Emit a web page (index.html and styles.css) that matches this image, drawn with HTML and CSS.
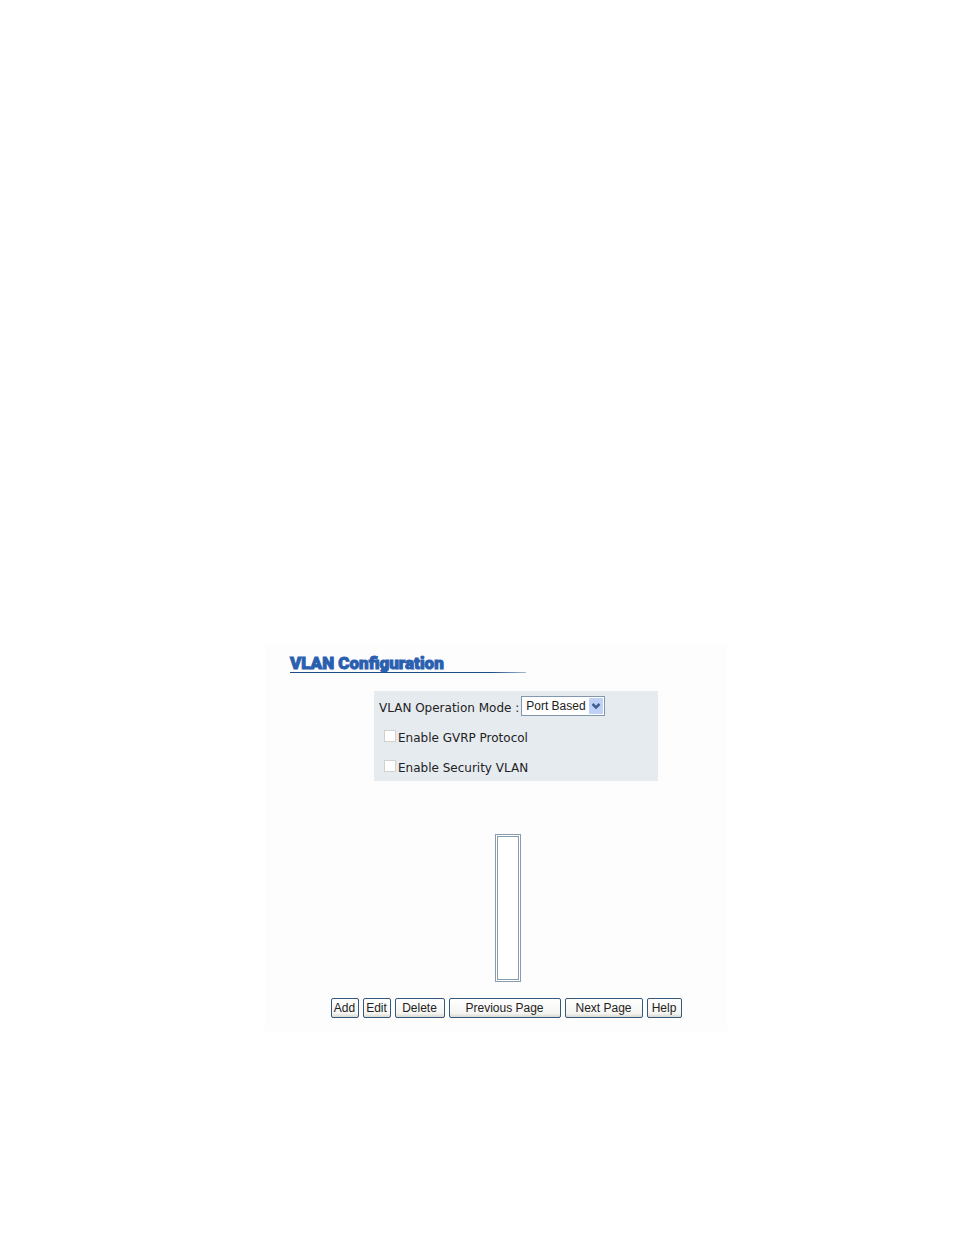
FILE: index.html
```
<!DOCTYPE html>
<html lang="en">
<head>
    <meta charset="UTF-8">
    <meta name="viewport" content="width=device-width, initial-scale=1.0">
    <title>VLAN Configuration</title>
    <link rel="stylesheet" href="styles.css">
</head>
<body>

    <main class="page">
        <h1 class="title">VLAN Configuration</h1>
        <form class="vlan-form">
            <div class="settings">
                <div class="row mode-row">
                    <label for="mode">VLAN Operation Mode :</label>
                    <span class="dropdown">
                        <select id="mode">
                            <option>Port Based</option>
                        </select>
                        <svg class="arrow" viewBox="0 0 14 16" aria-hidden="true">
                            <rect width="14" height="16" rx="1" fill="#bfd1f7"/>
                            <path d="M3.5 6l3.5 3.5L10.500 6" fill="none" stroke="#42608f" stroke-width="2.500"/>
                        </svg>
                    </span>
                </div>
                <div class="row check-row">
                    <input type="checkbox" id="gvrp" disabled>
                    <label for="gvrp">Enable GVRP Protocol</label>
                </div>
                <div class="row check-row">
                    <input type="checkbox" id="security" disabled>
                    <label for="security">Enable Security VLAN</label>
                </div>
            </div>

            <select class="vlan-list" size="8" aria-label="VLAN list"></select>

            <div class="buttons">
                <button type="button">Add</button>
                <button type="button">Edit</button>
                <button type="button" class="medium">Delete</button>
                <button type="button" class="wide">Previous Page</button>
                <button type="button" class="next">Next Page</button>
                <button type="button" class="help">Help</button>
            </div>
        </form>
    </main>

</body>
</html>
```
FILE: styles.css
```
* {
    margin: 0;
    padding: 0;
    box-sizing: border-box;
}
body {
    background-color: #fff;
    color: #222;
    font-family: Verdana, "DejaVu Sans", sans-serif;
    font-size: 12px;
    padding: 645px 0 0 265px;
}
.page {
    max-width: 462px;
    background-color: #fdfdfd;
    padding: 7px 25px 13px;
}
.title {
    width: 236px;
    border-bottom: 1px solid;
    border-image: linear-gradient(to right, #1d4d86 85%, #a9bdd3) 1;
    color: #2a5fb0;
    font-family: Impact, Roboto, sans-serif;
    font-size: 17px;
    font-weight: 900;
    line-height: 20px;
    padding-top: 1px;
    height: 21px;
    white-space: nowrap;
    -webkit-text-stroke: 1px #2a5fb0;
}
.vlan-form {
    display: flex;
    flex-direction: column;
    align-items: center;
    padding-top: 18px;
    padding-left: 20px;
}
.settings {
    width: 284px;
    margin-left: 20px;
    background-color: #e6ebf0;
}
.row {
    display: flex;
    align-items: center;
    height: 30px;
    padding-left: 5px;
}
.mode-row {
    gap: 2px;
}
.check-row {
    padding-left: 10px;
    gap: 2px;
}
.row label {
    padding-top: 4px;
}
.dropdown {
    position: relative;
}
.dropdown select {
    display: block;
    appearance: none;
    width: 84px;
    height: 20px;
    padding-left: 4px;
    border: 1px solid #8296ad;
    border-radius: 0;
    background-color: #fff;
    color: #222;
    font: 12px Arial, "Liberation Sans", sans-serif;
}
.arrow {
    position: absolute;
    top: 2px;
    right: 2px;
    width: 14px;
    height: 16px;
    pointer-events: none;
}
.check-row input {
    appearance: none;
    width: 12px;
    height: 12px;
    border: 1px solid #d2d2cc;
    background-color: #fff;
}
.vlan-list {
    appearance: none;
    width: 26px;
    height: 148px;
    margin-top: 53px;
    margin-left: 4px;
    border: 3px double #8a9bb0;
    border-radius: 0;
    background-color: #fff;
}
.buttons {
    display: flex;
    gap: 4px;
    margin-top: 16px;
}
button {
    width: 28px;
    height: 20px;
    border: 1px solid #35597f;
    border-radius: 2px;
    background: linear-gradient(#fff, #f4f4f1 80%, #d9d7d0);
    color: #222;
    font: 12px Arial, "Liberation Sans", sans-serif;
    white-space: nowrap;
}
.medium {
    width: 50px;
}
.wide {
    width: 112px;
}
.next {
    width: 78px;
}
.help {
    width: 35px;
}
```
